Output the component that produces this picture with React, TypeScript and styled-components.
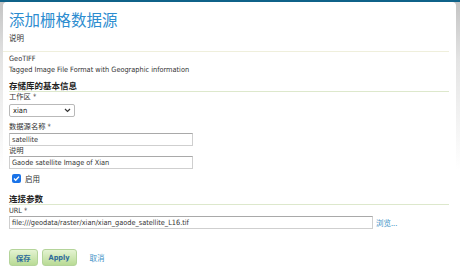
import React, { useState } from 'react';
import styled, { createGlobalStyle } from 'styled-components';

const GlobalStyle = createGlobalStyle`
  html, body {
    margin: 0;
    padding: 0;
    background: #fff;
  }
  body {
    font-family: "DejaVu Sans Condensed", "Liberation Sans", "Noto Sans CJK SC", sans-serif;
    color: #222;
  }
`;

const Page = styled.div`
  width: 460px;
  height: 270px;
  overflow: hidden;
  padding: 2px 4px 0 3px;
  box-sizing: border-box;
  background: linear-gradient(#0f6289 0, #0f6289 2px, #c4c4c4 2px, #e4e4e4 60px, #fff 170px);
`;

const Panel = styled.div`
  background: #fff;
  border-radius: 4px 4px 0 0;
  height: 100%;
  padding: 6px 7px 0 6px;
  box-sizing: border-box;
`;

const Title = styled.h1`
  margin: 0;
  font-family: "Noto Sans CJK SC", sans-serif;
  font-weight: 400;
  font-size: 15.5px;
  line-height: 22px;
  color: #2d8dd0;
`;

const Small = styled.div`
  font-size: 7.3px;
  line-height: 11px;
  color: #333;
`;

const Intro = styled.div`
  margin: 3px 0 0 -6px;
  padding: 0 0 8px 6px;
  font-family: "Noto Sans CJK SC", sans-serif;
  font-size: 7.5px;
  line-height: 10px;
  color: #333;
  border-bottom: 1px solid #efefdc;
`;

const Desc = styled.div`
  padding-top: 2px;
  font-size: 7.3px;
  line-height: 10px;
  color: #333;
`;

const Heading = styled.h3<{ $gap: number }>`
  margin: ${(p) => p.$gap}px 0 0;
  font-family: "Noto Sans CJK SC", sans-serif;
  font-weight: 700;
  font-size: 8.5px;
  line-height: 11px;
  color: #222;
  border-bottom: 1px solid #dde8cc;
`;

const Label = styled.label<{ $gap?: number }>`
  display: block;
  font-family: "DejaVu Sans Condensed", "Liberation Sans", "Noto Sans CJK SC", sans-serif;
  font-size: 7.3px;
  line-height: 10px;
  color: #333;
  margin-top: ${(p) => p.$gap ?? 0}px;
`;

const Field = styled.div<{ $w: number; $gap?: number }>`
  width: ${(p) => p.$w}px;
  height: 13px;
  margin-top: ${(p) => p.$gap ?? 0}px;
  box-sizing: border-box;
  border: 1px solid #cfcfcf;
  border-top-color: #a9a9a9;
  background: #fff;
  padding: 0 2px;
  font-size: 7.3px;
  line-height: 11px;
  color: #333;
  white-space: nowrap;
  overflow: hidden;
`;

const SelectBox = styled.div`
  width: 66px;
  height: 13px;
  margin-top: 2px;
  box-sizing: border-box;
  border: 1px solid #b9b9b9;
  border-radius: 2px;
  padding: 0 3px;
  display: flex;
  align-items: center;
  justify-content: space-between;
  font-size: 7.5px;
  color: #222;
`;

const Row = styled.div`
  display: flex;
  align-items: center;
  gap: 3px;
`;

const CheckRow = styled(Row)`
  margin-top: 5px;
  margin-left: 3px;
  height: 9px;
  gap: 4px;
  font-family: "Noto Sans CJK SC", sans-serif;
  font-size: 7.5px;
  color: #333;
`;

const Box = styled.span`
  width: 9px;
  height: 9px;
  border-radius: 2px;
  background: #1a73e8;
  display: flex;
  align-items: center;
  justify-content: center;
`;

const Link = styled.a`
  font-family: "Noto Sans CJK SC", sans-serif;
  font-size: 7.5px;
  color: #3f93c6;
  text-decoration: none;
  cursor: pointer;
`;

const Buttons = styled(Row)`
  margin-top: 20px;
  gap: 4px;
`;

const Button = styled.button`
  height: 17px;
  padding: 0 6px;
  border: 1px solid #b4d49a;
  border-radius: 3px;
  background: linear-gradient(#e4f3d2, #b9db95);
  font-family: "DejaVu Sans Condensed", "Liberation Sans", "Noto Sans CJK SC", sans-serif;
  font-weight: 700;
  font-size: 7.3px;
  color: #2d6b9c;
  cursor: pointer;
`;

const Cancel = styled(Link)`
  margin-left: 9px;
`;

export default function App() {
  const [enabled, setEnabled] = useState(true);
  return (
    <>
      <GlobalStyle />
      <Page>
        <Panel>
          <Title>添加栅格数据源</Title>
          <Intro>说明</Intro>
          <Desc>GeoTIFF</Desc>
          <Small>Tagged Image File Format with Geographic information</Small>

          <Heading $gap={5}>存储库的基本信息</Heading>
          <Label>工作区 *</Label>
          <SelectBox>
            xian
            <svg width="7" height="5" viewBox="0 0 7 5">
              <path d="M1 1l2.5 2.5L6 1" fill="none" stroke="#333" strokeWidth="1.2" />
            </svg>
          </SelectBox>
          <Label $gap={5}>数据源名称 *</Label>
          <Field $w={184} $gap={1}>satellite</Field>
          <Label>说明</Label>
          <Field $w={184}>Gaode satellite Image of Xian</Field>
          <CheckRow onClick={() => setEnabled(!enabled)}>
            <Box>
              {enabled && (
                <svg width="7" height="7" viewBox="0 0 7 7">
                  <path d="M1 3.6l1.7 1.6L6 1.6" fill="none" stroke="#fff" strokeWidth="1.4" />
                </svg>
              )}
            </Box>
            启用
          </CheckRow>

          <Heading $gap={10}>连接参数</Heading>
          <Label $gap={1}>URL *</Label>
          <Row>
            <Field $w={364}>file:///geodata/raster/xian/xian_gaode_satellite_L16.tif</Field>
            <Link>浏览...</Link>
          </Row>

          <Buttons>
            <Button>保存</Button>
            <Button>Apply</Button>
            <Cancel>取消</Cancel>
          </Buttons>
        </Panel>
      </Page>
    </>
  );
}
